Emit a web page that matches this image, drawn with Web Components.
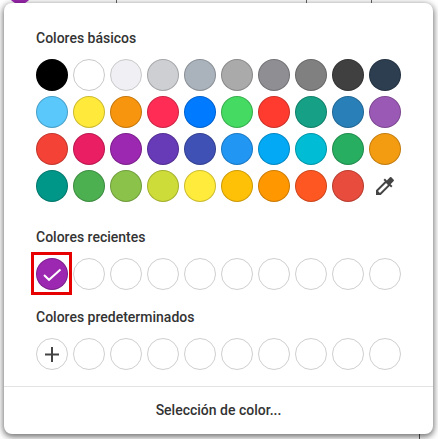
<!DOCTYPE html>
<html><head><meta charset="utf-8"><style>
html,body{margin:0;padding:0;height:100%;overflow:hidden}
body{background:#fff;font-family:Roboto,"Liberation Sans",sans-serif}
</style></head><body>
<app-backdrop><color-popover></color-popover></app-backdrop>
<script>
class AppBackdrop extends HTMLElement{constructor(){super();this.attachShadow({mode:'open'}).innerHTML=`<style>
:host{display:block;position:relative;width:438px;height:439px;overflow:hidden;background:#fff}
.line{position:absolute;top:0;width:1px;height:8px;background:#666}
.blob{position:absolute;left:8px;top:-20px;width:24px;height:24px;border-radius:50%;background:#9c27b0}
.low{position:absolute;top:430px;left:419px;width:1px;height:9px;background:#555}
</style><div class="blob"></div><div class="line" style="left:116px"></div><div class="line" style="left:306px"></div><div class="line" style="left:371px"></div><div class="low"></div><slot></slot>`}}
customElements.define('app-backdrop',AppBackdrop);

class ColorSwatch extends HTMLElement{constructor(){super();const c=this.getAttribute('color');const b=this.getAttribute('edge');const k=this.getAttribute('kind');
let inner='';
if(k==='check')inner='<svg width="32" height="32" viewBox="0 0 32 32"><path d="M8 17l5 4.800L24.500 11.500" fill="none" stroke="#fff" stroke-width="2"/></svg>';
if(k==='plus')inner='<svg width="32" height="32" viewBox="0 0 32 32"><path d="M16 9v15M9 16.500h14" fill="none" stroke="#444" stroke-width="2"/></svg>';
this.attachShadow({mode:'open'}).innerHTML=`<style>
:host{display:block;width:32px;height:32px;position:relative}
.c{box-sizing:border-box;width:32px;height:32px;border-radius:50%;border:1px solid ${b||'rgba(0,0,0,.2)'};background:${c||'#fff'};position:relative}
svg{position:absolute;left:-1px;top:-1px;display:block}
</style><div class="c">${inner}</div>`}}
customElements.define('color-swatch',ColorSwatch);

class SwatchGrid extends HTMLElement{constructor(){super();this.attachShadow({mode:'open'}).innerHTML=`<style>
:host{display:grid;grid-template-columns:repeat(10,32px);column-gap:5px;row-gap:5px}
</style><slot></slot>`}}
customElements.define('swatch-grid',SwatchGrid);

class SectionTitle extends HTMLElement{constructor(){super();this.attachShadow({mode:'open'}).innerHTML=`<style>
:host{display:block;font:500 14px/20px Roboto,"Liberation Sans",sans-serif;color:#333;}
</style><slot></slot>`}}
customElements.define('section-title',SectionTitle);

class ColorPopover extends HTMLElement{constructor(){super();
const basic=['#000000','#ffffff','#efeff4','#cecfd2','#aab2bb','#aaaaaa','#8e8e93','#808080','#404040','#2c3e50','#5ac8fa','#ffe93b','#f7950f','#ff2d55','#007aff','#45da61','#ff3b30','#16a085','#2980b9','#9b59b6','#f44336','#e91e63','#9c27b0','#673ab7','#3f51b5','#2196f3','#03a9f4','#00bcd4','#27ae60','#f39c12','#009688','#4caf50','#8bc34a','#cddc39','#ffeb3b','#ffc107','#ff9800','#ff5722','#e74c3c'];
const edge=c=>c==='#ffffff'||c==='#efeff4'?'#c9c9c9':'rgba(0,0,0,.2)';
const basicHtml=basic.map(c=>`<color-swatch color="${c}" edge="${edge(c)}"></color-swatch>`).join('')+`<div class="drop"><svg width="24" height="24" viewBox="0 0 24 24"><path fill="#444" d="M20.71 5.630l-2.340-2.340a.996.996 0 0 0-1.410 0l-3.120 3.120-1.930-1.910-1.410 1.410 1.420 1.420L3 16.250V21h4.750l8.920-8.920 1.420 1.420 1.410-1.410-1.920-1.920 3.120-3.120c.4-.4.4-1.030.01-1.420zM6.920 19L5 17.080l8.060-8.060 1.920 1.920L6.920 19z"/></svg></div>`;
const blank=n=>Array.from({length:n},()=>'<color-swatch edge="#cfcfcf"></color-swatch>').join('');
this.attachShadow({mode:'open'}).innerHTML=`<style>
:host{display:flex;flex-direction:column;box-sizing:border-box;position:absolute;left:4px;top:3px;width:429px;height:431px;background:#fff;border-radius:8px;box-shadow:0 2px 6px 1px rgba(0,0,0,.55);padding-top:25px;font-family:Roboto,"Liberation Sans",sans-serif}
.body{padding:0 32px;display:flex;flex-direction:column}
.t1{margin-bottom:11px}.t2{margin-top:25px;margin-bottom:11px}.t3{margin-top:17px;margin-bottom:11px}
.drop{box-sizing:border-box;width:32px;height:32px;padding:4px}.drop svg{display:block}
.foot{box-sizing:border-box;margin-top:16px;border-top:1px solid #e4e4e4;height:44px;padding-top:2px;display:flex;align-items:center;justify-content:center;font:500 14px/20px Roboto,"Liberation Sans",sans-serif;color:#333}
.sel{position:absolute;left:27px;top:249px;width:41px;height:43px;box-sizing:border-box;border:3px solid #e60000;pointer-events:none}
</style><div class="body">
<section-title class="t1">Colores básicos</section-title>
<swatch-grid>${basicHtml}</swatch-grid>
<section-title class="t2">Colores recientes</section-title>
<swatch-grid><color-swatch color="#9c27b0" kind="check"></color-swatch>${blank(9)}</swatch-grid>
<section-title class="t3">Colores predeterminados</section-title>
<swatch-grid><color-swatch edge="#cfcfcf" kind="plus"></color-swatch>${blank(9)}</swatch-grid>
</div><div class="foot">Selección de color...</div><div class="sel"></div>`}}
customElements.define('color-popover',ColorPopover);
</script></body></html>
